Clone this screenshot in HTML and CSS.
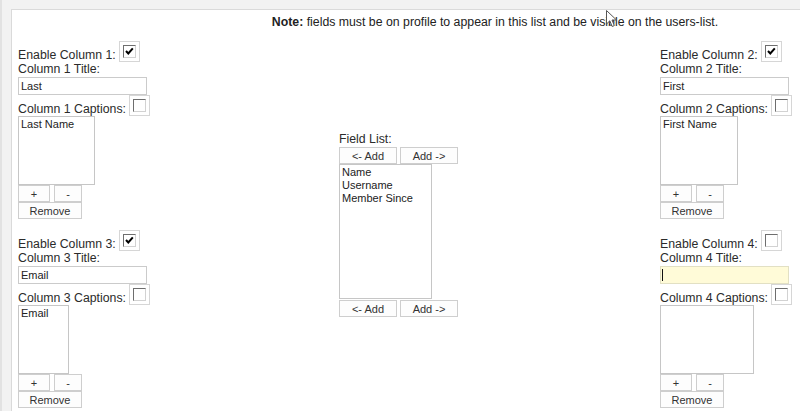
FILE: index.html
```
<!DOCTYPE html>
<html lang="en">
<head>
    <meta charset="UTF-8">
    <meta name="viewport" content="width=device-width, initial-scale=1.0">
    <title>Users List Columns</title>
    <link rel="stylesheet" href="styles.css">
</head>
<body>
    <div class="page">
        <p class="note"><b>Note:</b> fields must be on profile to appear in this list and be visible on the users-list.</p>

        <div class="columns">
            <div class="side">
                <div class="column-box">
                    <div class="check-row">Enable Column 1:<span class="check"><span class="box checked"></span></span></div>
                    <div class="label">Column 1 Title:</div>
                    <input type="text" class="title-input" value="Last">
                    <div class="check-row">Column 1 Captions:<span class="check"><span class="box"></span></span></div>
                    <div class="listbox list-last">
                        <div class="item">Last Name</div>
                    </div>
                    <div class="btn-row">
                        <button class="btn btn-plus">+</button>
                        <button class="btn btn-minus">-</button>
                    </div>
                    <button class="btn btn-remove">Remove</button>
                </div>

                <div class="column-box">
                    <div class="check-row">Enable Column 3:<span class="check"><span class="box checked"></span></span></div>
                    <div class="label">Column 3 Title:</div>
                    <input type="text" class="title-input" value="Email">
                    <div class="check-row">Column 3 Captions:<span class="check"><span class="box"></span></span></div>
                    <div class="listbox list-email">
                        <div class="item">Email</div>
                    </div>
                    <div class="btn-row">
                        <button class="btn btn-plus">+</button>
                        <button class="btn btn-minus">-</button>
                    </div>
                    <button class="btn btn-remove">Remove</button>
                </div>
            </div>

            <div class="center">
                <div class="label">Field List:</div>
                <div class="btn-row">
                    <button class="btn btn-add">&lt;- Add</button>
                    <button class="btn btn-add">Add -&gt;</button>
                </div>
                <div class="listbox list-fields">
                    <div class="item">Name</div>
                    <div class="item">Username</div>
                    <div class="item">Member Since</div>
                </div>
                <div class="btn-row btn-row-bottom">
                    <button class="btn btn-add">&lt;- Add</button>
                    <button class="btn btn-add">Add -&gt;</button>
                </div>
            </div>

            <div class="side">
                <div class="column-box">
                    <div class="check-row">Enable Column 2:<span class="check"><span class="box checked"></span></span></div>
                    <div class="label">Column 2 Title:</div>
                    <input type="text" class="title-input" value="First">
                    <div class="check-row">Column 2 Captions:<span class="check"><span class="box"></span></span></div>
                    <div class="listbox list-first">
                        <div class="item">First Name</div>
                    </div>
                    <div class="btn-row">
                        <button class="btn btn-plus">+</button>
                        <button class="btn btn-minus">-</button>
                    </div>
                    <button class="btn btn-remove">Remove</button>
                </div>

                <div class="column-box">
                    <div class="check-row">Enable Column 4:<span class="check"><span class="box"></span></span></div>
                    <div class="label">Column 4 Title:</div>
                    <span class="focused"><input type="text" class="title-input" value=""></span>
                    <div class="check-row">Column 4 Captions:<span class="check"><span class="box"></span></span></div>
                    <div class="listbox list-empty"></div>
                    <div class="btn-row">
                        <button class="btn btn-plus">+</button>
                        <button class="btn btn-minus">-</button>
                    </div>
                    <button class="btn btn-remove">Remove</button>
                </div>
            </div>
        </div>
    </div>

    <svg class="cursor" width="12" height="18" viewBox="0 0 12 18">
        <path d="M0.5 0.5 L0.5 14 L3.8 10.8 L6.2 16.5 L8.3 15.6 L6 10 L10.5 10 Z" fill="#fff" stroke="#555" stroke-width="1"/>
    </svg>
</body>
</html>
```

FILE: styles.css
```
html {
    background-color: #f2f2f2;
}
body {
    margin: 0;
    padding: 9px 0 0 9px;
    min-height: 100vh;
    box-sizing: border-box;
    border-left: 2px solid #e2e2e2;
    font-family: "Liberation Sans", Arial, sans-serif;
    font-size: 12.3px;
    color: #2b2b2b;
    overflow: hidden;
    position: relative;
}
.page {
    background-color: #fff;
    border-top: 1px solid #dadada;
    border-left: 1px solid #dadada;
    min-height: 402px;
    padding: 0 6px;
}
.note {
    margin: 0;
    padding: 5px 0 0 178px;
    line-height: 15px;
    text-align: center;
    color: #222;
}
.columns {
    display: grid;
    grid-template-columns: 321px 321px 1fr;
    margin-top: 11px;
}
.side {
    display: flex;
    flex-direction: column;
    gap: 11px;
}
.center {
    align-self: center;
    display: flex;
    flex-direction: column;
    align-items: flex-start;
}
.column-box {
    display: flex;
    flex-direction: column;
    align-items: flex-start;
}
.check-row {
    display: flex;
    align-items: flex-end;
    gap: 3px;
    height: 21px;
    line-height: 14px;
}
.label {
    line-height: 15px;
}
.check {
    display: inline-flex;
    padding: 3px;
    border: 1px solid #d6d6d6;
    background-color: #fff;
}
.box {
    width: 13px;
    height: 13px;
    box-sizing: border-box;
    border: 1px solid;
    border-color: #6e6e6e #d2d2d2 #d2d2d2 #6e6e6e;
    background-color: #fff;
}
.box.checked {
    background: #fff url("data:image/svg+xml;utf8,<svg xmlns='http://www.w3.org/2000/svg' width='11' height='11'><polyline points='2,5 4.3,7.5 8.8,2.3' fill='none' stroke='black' stroke-width='2'/></svg>") no-repeat center;
}
.title-input {
    width: 129px;
    height: 18px;
    box-sizing: border-box;
    margin: 0;
    padding: 0 2px;
    border: 1px solid #cbcbcb;
    font-family: "Liberation Sans", Arial, sans-serif;
    font-size: 11px;
    color: #222;
    outline: none;
}
.focused {
    position: relative;
    display: block;
}
.focused .title-input {
    background-color: #fffbd8;
    border-color: #e2e0c4;
}
.focused::after {
    content: "";
    position: absolute;
    left: 2px;
    top: 3px;
    width: 1px;
    height: 12px;
    background-color: #111;
}
.listbox {
    height: 69px;
    box-sizing: border-box;
    padding: 1px 2px;
    border: 1px solid #c6c6c6;
    background-color: #fff;
    font-size: 11px;
    line-height: 13px;
    color: #222;
}
.list-last { width: 77px; }
.list-first { width: 78px; }
.list-email { width: 51px; }
.list-empty { width: 94px; }
.list-fields {
    width: 93px;
    height: 135px;
}
.btn-row {
    display: flex;
    gap: 4px;
}
.btn-row-bottom {
    margin-top: 1px;
}
.btn {
    height: 17px;
    margin: 0;
    padding: 0;
    border: 1px solid #cecece;
    background-color: #fdfdfd;
    font-family: "Liberation Sans", Arial, sans-serif;
    font-size: 11px;
    color: #333;
}
.btn-plus { width: 32px; }
.btn-minus { width: 28px; }
.btn-remove { width: 64px; }
.btn-add { width: 58px; }
.center .btn-row {
    gap: 3px;
}
.cursor {
    position: absolute;
    left: 604px;
    top: 10px;
}
```
